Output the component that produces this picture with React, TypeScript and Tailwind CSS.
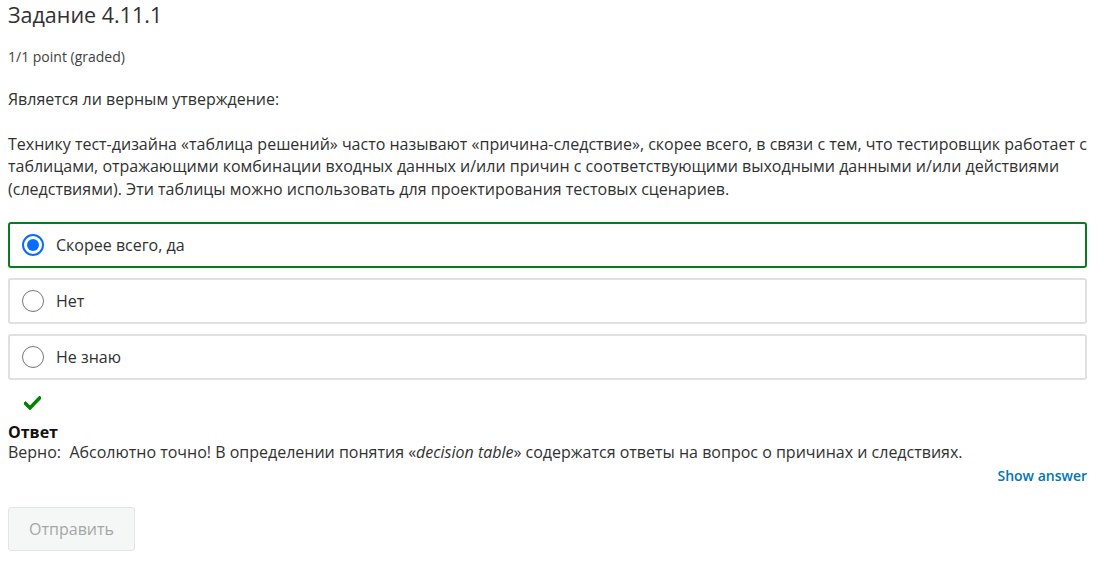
const OPTIONS = [
  { label: "Скорее всего, да", checked: true },
  { label: "Нет", checked: false },
  { label: "Не знаю", checked: false },
];

function Radio({ checked }: { checked: boolean }) {
  if (checked) {
    return (
      <span className="flex size-[22px] shrink-0 items-center justify-center rounded-full border-[2px] border-[#0a6cff] bg-white">
        <span className="size-[12px] rounded-full bg-[#0a6cff]" />
      </span>
    );
  }
  return <span className="size-[22px] shrink-0 rounded-full border border-[#767676] bg-white" />;
}

export default function App() {
  return (
    <div className="min-h-screen bg-white px-2 font-['Open_Sans',sans-serif] text-[#313131]">
      <h3 className="text-[21.5px] leading-[30px] text-[#313131]">Задание 4.11.1</h3>
      <div className="mt-[17px] text-[14px] leading-[20px] text-[#414141]">1/1 point (graded)</div>

      <p className="mt-[21px] text-[16px] leading-[22.5px]">Является ли верным утверждение:</p>
      <p className="mt-[22px] text-[16px] leading-[22.6px]">
        Технику тест-дизайна «таблица решений» часто называют «причина-следствие», скорее всего, в связи с тем, что
        тестировщик работает с таблицами, отражающими комбинации входных данных и/или причин с соответствующими
        выходными данными и/или действиями (следствиями). Эти таблицы можно использовать для проектирования тестовых
        сценариев.
      </p>

      <div className="mt-[22px] mr-[9px] flex flex-col gap-[10px]">
        {OPTIONS.map((o) => (
          <label
            key={o.label}
            className={
              o.checked
                ? "flex h-[46px] items-center gap-[12px] rounded-[3px] border-2 border-[#0a7a1f] pl-[12px] text-[16px]"
                : "flex h-[46px] items-center gap-[12px] rounded-[3px] border-2 border-[#e0e0e0] pl-[12px] text-[16px]"
            }
          >
            <Radio checked={o.checked} />
            <span>{o.label}</span>
          </label>
        ))}
      </div>

      <div className="mt-[16px] pl-[16px]">
        <svg width="17" height="14" viewBox="0 0 17 14" className="text-[#008100]">
          <path d="M1.5 7.5 L6 12 L15.5 2" fill="none" stroke="currentColor" strokeWidth="3.4" strokeLinecap="square" />
        </svg>
      </div>

      <div className="mt-[12px] text-[16px] leading-[20px]">
        <div className="font-bold text-[#111]">Ответ</div>
        <div>
          Верно:&nbsp; Абсолютно точно! В определении понятия «<em>decision table</em>» содержатся ответы на вопрос о
          причинах и следствиях.
        </div>
      </div>

      <div className="mt-[4px] mr-[9px] flex justify-end">
        <button className="text-[14px] font-semibold leading-[20px] text-[#0075b4]">Show answer</button>
      </div>

      <button className="mt-[21px] h-[44px] w-[127px] rounded-[3px] border border-[#e4e4e4] bg-[#f5f6f6] text-[16px] text-[#a6a6a6]">
        Отправить
      </button>
    </div>
  );
}
